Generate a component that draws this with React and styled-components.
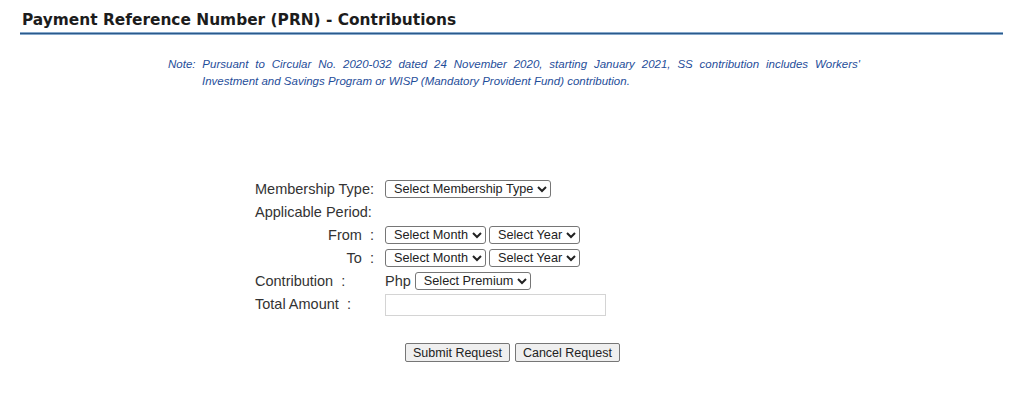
import React from "react";
import styled, { createGlobalStyle } from "styled-components";

const Global = createGlobalStyle`
  html, body { margin: 0; padding: 0; background: #fff; }
  body { font-family: "Liberation Sans", Arial, sans-serif; }
`;

const Page = styled.div`
  padding: 10px 21px 0 20px;
`;

const Title = styled.h1`
  margin: 0;
  padding: 0 0 0 2px;
  font-family: "DejaVu Sans", Verdana, sans-serif;
  font-weight: bold;
  font-size: 15.4px;
  line-height: 20px;
  color: #1c1c1c;
`;

const Rule = styled.div`
  margin-top: 2px;
  height: 1px;
  background: #2b5a8b;
  border-top: 1px solid #86a8cb;
  border-bottom: 1px solid #86a8cb;
`;

const Note = styled.p`
  margin: 21px 0 0 148px;
  width: 692px;
  padding-left: 34px;
  text-indent: -34px;
  font-style: italic;
  font-size: 11.5px;
  line-height: 17px;
  color: #1f4e9a;
  text-align: justify;
  box-sizing: border-box;
`;

const Form = styled.div`
  margin: 87px 0 0 235px;
  display: grid;
  grid-template-columns: 130px auto;
  grid-auto-rows: 23px;
  align-items: center;
  font-size: 14.5px;
  color: #333;
`;

const Label = styled.div`
  text-align: ${(p) => (p.$right ? "right" : "left")};
  padding-right: ${(p) => (p.$right ? "11px" : "0")};
  white-space: pre;
`;

const Controls = styled.div`
  display: flex;
  align-items: center;
  gap: 3px;
`;

const Select = styled.select`
  font-family: "Liberation Sans", Arial, sans-serif;
  font-size: 12.7px;
  color: #222;
  height: 18px;
  padding: 0 0 0 4px;
  border: 1px solid #767676;
  border-radius: 3px;
  background: #fff;
`;

const Php = styled.span`
  margin-right: 1px;
`;

const TextInput = styled.input`
  width: 221px;
  height: 22px;
  box-sizing: border-box;
  border: 1px solid #d4d4d4;
  margin-top: 2px;
`;

const Buttons = styled.div`
  display: flex;
  justify-content: flex-start;
  gap: 5px;
  margin: 28px 0 0 385px;
`;

const Button = styled.button`
  font-family: "Liberation Sans", Arial, sans-serif;
  font-size: 12.5px;
  color: #222;
  height: 19px;
  padding: 0 7px;
  background: #efefef;
  border: 1px solid #767676;
  border-radius: 2px;
`;

export default function App() {
  return (
    <>
      <Global />
      <Page>
        <Title>Payment Reference Number (PRN) - Contributions</Title>
        <Rule />
        <Note>
          Note: Pursuant to Circular No. 2020-032 dated 24 November 2020, starting January 2021, SS contribution includes Workers' Investment and Savings Program or WISP (Mandatory Provident Fund) contribution.
        </Note>
        <Form>
          <Label>Membership Type:</Label>
          <Controls>
            <Select defaultValue="">
              <option value="">Select Membership Type</option>
            </Select>
          </Controls>
          <Label>Applicable Period:</Label>
          <div />
          <Label $right>From  :</Label>
          <Controls>
            <Select defaultValue="">
              <option value="">Select Month</option>
            </Select>
            <Select defaultValue="">
              <option value="">Select Year</option>
            </Select>
          </Controls>
          <Label $right>To  :</Label>
          <Controls>
            <Select defaultValue="">
              <option value="">Select Month</option>
            </Select>
            <Select defaultValue="">
              <option value="">Select Year</option>
            </Select>
          </Controls>
          <Label>Contribution  :</Label>
          <Controls>
            <Php>Php</Php>
            <Select defaultValue="">
              <option value="">Select Premium</option>
            </Select>
          </Controls>
          <Label>Total Amount  :</Label>
          <Controls>
            <TextInput type="text" />
          </Controls>
        </Form>
        <Buttons>
          <Button>Submit Request</Button>
          <Button>Cancel Request</Button>
        </Buttons>
      </Page>
    </>
  );
}
